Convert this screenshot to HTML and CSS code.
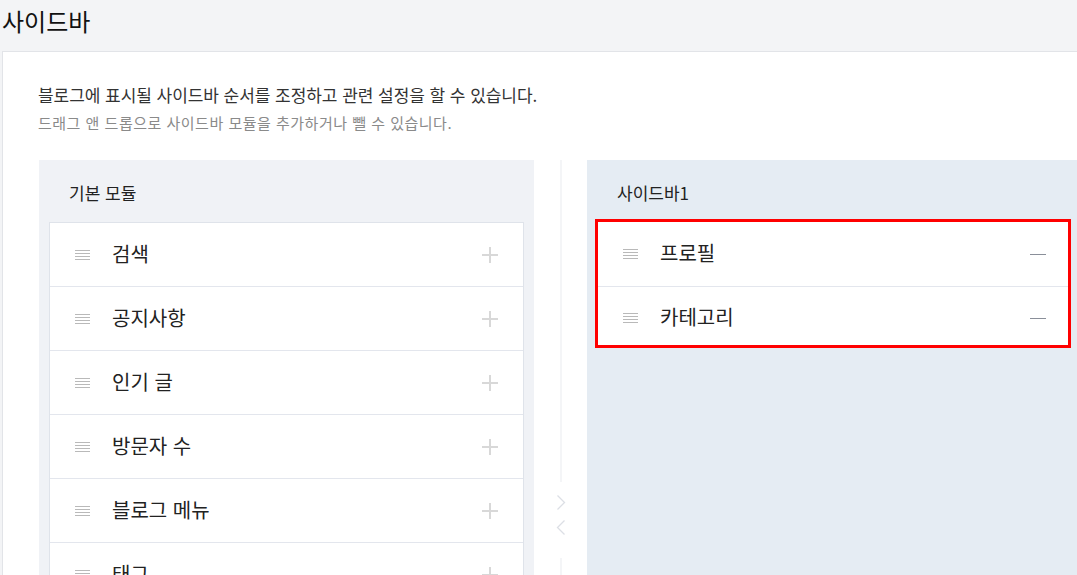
FILE: index.html
```html
<!DOCTYPE html>
<html lang="ko">
<head>
<meta charset="utf-8">
<title>사이드바</title>
<link rel="stylesheet" href="styles.css">
</head>
<body>
<h1 class="page-title">사이드바</h1>
<section class="card">
  <p class="desc">블로그에 표시될 사이드바 순서를 조정하고 관련 설정을 할 수 있습니다.</p>
  <p class="desc-sub">드래그 앤 드롭으로 사이드바 모듈을 추가하거나 뺄 수 있습니다.</p>
  <div class="columns">
    <div class="panel panel-basic">
      <h2 class="panel-title">기본 모듈</h2>
      <ul class="module-list">
        <li class="module"><span class="grip"><i></i><i></i><i></i><i></i></span><span class="name">검색</span><span class="plus"></span></li>
        <li class="module"><span class="grip"><i></i><i></i><i></i><i></i></span><span class="name">공지사항</span><span class="plus"></span></li>
        <li class="module"><span class="grip"><i></i><i></i><i></i><i></i></span><span class="name">인기 글</span><span class="plus"></span></li>
        <li class="module"><span class="grip"><i></i><i></i><i></i><i></i></span><span class="name">방문자 수</span><span class="plus"></span></li>
        <li class="module"><span class="grip"><i></i><i></i><i></i><i></i></span><span class="name">블로그 메뉴</span><span class="plus"></span></li>
        <li class="module"><span class="grip"><i></i><i></i><i></i><i></i></span><span class="name">태그</span><span class="plus"></span></li>
      </ul>
    </div>
    <div class="divider">
      <span class="line line-top"></span>
      <svg class="arrows" width="10" height="40" viewBox="0 0 10 40" fill="none" stroke="#dcdfe5" stroke-width="1.3">
        <path d="M1.5 0.5 L8.5 7.5 L1.5 14.5"/>
        <path d="M8.5 25.5 L1.5 32.5 L8.5 39.5"/>
      </svg>
      <span class="line line-bottom"></span>
    </div>
    <div class="panel panel-side">
      <h2 class="panel-title">사이드바1</h2>
      <ul class="module-list selected">
        <li class="module first"><span class="grip"><i></i><i></i><i></i><i></i></span><span class="name">프로필</span><span class="minus"></span></li>
        <li class="module last"><span class="grip"><i></i><i></i><i></i><i></i></span><span class="name">카테고리</span><span class="minus"></span></li>
      </ul>
    </div>
  </div>
</section>
</body>
</html>
```
FILE: styles.css
```css
html, body {
  margin: 0;
  padding: 0;
}
body {
  background: #f3f4f6;
  font-family: "Noto Sans CJK KR", "Noto Sans", sans-serif;
  color: #222;
  overflow: hidden;
  width: 1077px;
  height: 575px;
}
.page-title {
  margin: 0;
  height: 51px;
  box-sizing: border-box;
  padding: 2px 0 0 2px;
  font-size: 24px;
  line-height: 38px;
  font-weight: 400;
  color: #111;
}
.card {
  margin-left: 2px;
  background: #fff;
  border-top: 1px solid #e2e4e8;
  border-left: 1px solid #e2e4e8;
  padding: 30px 0 0 35px;
  height: 600px;
  box-sizing: border-box;
}
.desc {
  margin: 0;
  font-size: 17px;
  letter-spacing: -0.05px;
  line-height: 25px;
  color: #333;
}
.desc-sub {
  margin: 5px 0 0;
  font-size: 15px;
  letter-spacing: 0.5px;
  line-height: 22px;
  color: #8a8a8a;
}
.columns {
  display: flex;
  margin-top: 26px;
  margin-left: 1px;
  align-items: stretch;
  height: 420px;
}
.panel {
  width: 495px;
  flex: none;
  box-sizing: border-box;
  padding: 0 10px;
}
.panel-basic {
  background: #f0f2f6;
}
.panel-side {
  background: #e5ecf3;
  padding: 0 0 0 8px;
}
.panel-title {
  margin: 0;
  height: 62px;
  padding-left: 20px;
  font-size: 17px;
  font-weight: 400;
  line-height: 66px;
  color: #222;
}
.panel-side .panel-title {
  padding-left: 22px;
}
.module-list {
  list-style: none;
  margin: 0;
  padding: 0;
  background: #fff;
  border: 1px solid #dfe3ea;
}
.module {
  display: flex;
  align-items: center;
  height: 63px;
  border-bottom: 1px solid #e3e6ed;
  padding: 0 25px;
  font-size: 20px;
  color: #222;
}
.grip {
  display: flex;
  flex-direction: column;
  gap: 2px;
  width: 15px;
  margin-right: 22px;
}
.grip i {
  display: block;
  height: 1px;
  background: #b9b9b9;
}
.name {
  flex: 1;
  line-height: 26px;
  margin-top: -2px;
}
.plus {
  position: relative;
  width: 16px;
  height: 16px;
}
.plus::before, .plus::after {
  content: "";
  position: absolute;
  background: #d8d8d8;
}
.plus::before {
  left: 0;
  right: 0;
  top: 7px;
  height: 2px;
}
.plus::after {
  top: 0;
  bottom: 0;
  left: 7px;
  width: 2px;
}
.divider {
  width: 53px;
  flex: none;
  display: flex;
  flex-direction: column;
  align-items: center;
}
.line {
  width: 2px;
  background: #f4f5f7;
}
.line-top {
  height: 322px;
}
.line-bottom {
  flex: 1;
}
.arrows {
  margin: 13px 0 23px;
}
.selected {
  border: 3px solid #ff0000;
  width: 476px;
  box-sizing: border-box;
  margin-top: -3px;
}
.selected .module {
  padding: 0 0 0 25px;
}
.selected .module.first {
  height: 64px;
}
.selected .module.last {
  height: 58px;
  border-bottom: none;
  padding-top: 4px;
  box-sizing: border-box;
}
.minus {
  width: 16px;
  height: 1px;
  background: #8a8f99;
  margin-right: 22px;
}
```
